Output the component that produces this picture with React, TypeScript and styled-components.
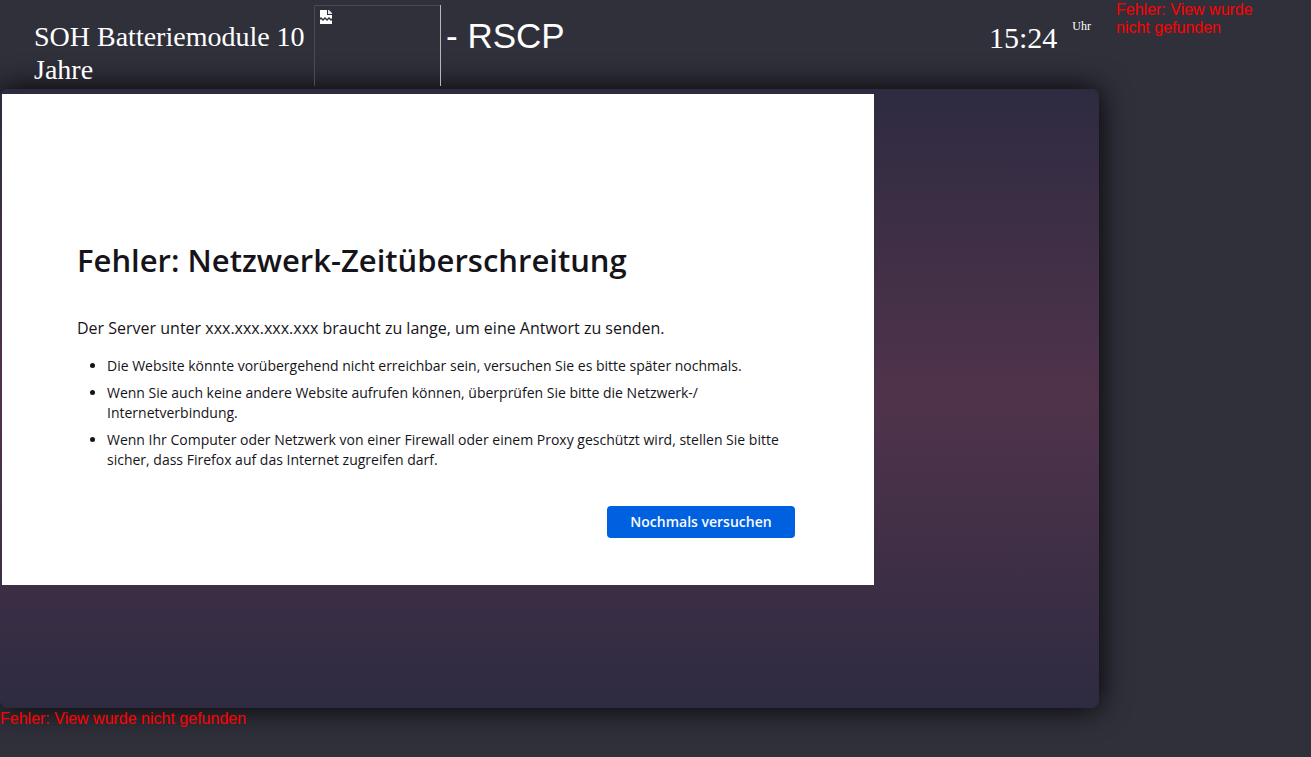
import React from "react";
import styled, { createGlobalStyle } from "styled-components";

const GlobalStyle = createGlobalStyle`
  * { box-sizing: border-box; }
  body {
    margin: 0;
    background: #30303b;
    color: #fff;
    font-family: "Liberation Sans", Arial, sans-serif;
  }
`;

const Page = styled.div`
  display: grid;
  grid-template-columns: minmax(0, 1fr) 212px;
  min-height: 100vh;
`;

const MainColumn = styled.div`
  display: flex;
  flex-direction: column;
`;

/* Stacked above the panel so that its shadow does not darken the title. */
const Header = styled.header`
  position: relative;
  z-index: 1;
  display: flex;
  align-items: flex-start;
  height: 89px;
  padding: 0 8px 0 34px;
`;

const Title = styled.h1`
  width: 280px;
  margin: 0;
  padding-top: 20px;
  font: 400 28px/33px "Liberation Serif", "Times New Roman", serif;
`;

const MissingImage = styled.svg`
  flex: none;
  width: 127px;
  height: 81px;
  margin-top: 5px;
`;

const Protocol = styled.span`
  flex: 1;
  padding: 16px 0 0 5px;
  font-size: 35px;
  line-height: 40px;
`;

const Clock = styled.time`
  display: flex;
  gap: 15px;
  font-family: "Liberation Serif", "Times New Roman", serif;
`;

const ClockTime = styled.span`
  padding-top: 20px;
  font-size: 30px;
  line-height: 36px;
`;

const ClockUnit = styled.span`
  padding-top: 18px;
  font-size: 12px;
  line-height: 16px;
`;

const Panel = styled.main`
  flex: 1;
  padding: 5px 2px;
  border-radius: 8px;
  background: linear-gradient(#2e2b41, #50334b 50%, #2e2b41);
  box-shadow: 0 0 30px #000;
`;

const ErrorFrame = styled.section`
  display: flex;
  flex-direction: column;
  width: 80%;
  max-width: 872px;
  min-height: 491px;
  padding: 142px 79px 47px 75px;
  background: #fff;
  color: #15141a;
  font-family: "Open Sans", "Segoe UI", sans-serif;
`;

const ErrorHeading = styled.h2`
  margin: 0;
  font-size: 31px;
  font-weight: 600;
  line-height: 48px;
`;

const ErrorText = styled.p`
  margin: 32px 0 0;
  font-size: 16px;
  line-height: 24px;
`;

const Hints = styled.ul`
  margin: 16px 0 0;
  padding-left: 30px;
  font-size: 14px;
  line-height: 20px;
`;

const Hint = styled.li`
  margin-bottom: 7px;
`;

const RetryButton = styled.button`
  align-self: flex-end;
  width: 188px;
  height: 32px;
  margin-top: 29px;
  padding: 0;
  border: 0;
  border-radius: 4px;
  background: #0061e0;
  color: #fbfbfe;
  font: 600 14px/20px "Open Sans", "Segoe UI", sans-serif;
`;

const ViewError = styled.p`
  margin: 0;
  color: #f00;
  font-size: 16px;
  line-height: 18px;
`;

const Footer = styled.footer`
  position: relative;
  height: 49px;
  padding-top: 2px;
`;

const Sidebar = styled.aside`
  position: relative;
  padding: 1px 40px 0 17px;
`;

export default function App() {
  return (
    <>
      <GlobalStyle />
      <Page>
        <MainColumn>
          <Header>
            <Title>SOH Batteriemodule 10 Jahre</Title>
            <MissingImage viewBox="0 0 127 81" aria-hidden="true">
              <path d="M0.5 81V0.5H126" fill="none" stroke="#4a4a55" />
              <path d="M126.5 0V81" stroke="#b5b5ba" />
              <path
                d="M6 5h7v5h5v3l-1 1-2-2-2 2-2-2-2 2-2-2-1 1z"
                fill="#fff"
              />
              <path d="M14 5h1l3 3v1h-4z" fill="#e4e4e8" />
              <path d="M6 15l1-1 2 2 2-2 2 2 2-2 2 2 1-1v4H6z" fill="#fff" />
            </MissingImage>
            <Protocol>- RSCP</Protocol>
            <Clock>
              <ClockTime>15:24</ClockTime>
              <ClockUnit>Uhr</ClockUnit>
            </Clock>
          </Header>
          <Panel>
            <ErrorFrame>
              <ErrorHeading>Fehler: Netzwerk-Zeitüberschreitung</ErrorHeading>
              <ErrorText>
                Der Server unter xxx.xxx.xxx.xxx braucht zu lange, um eine
                Antwort zu senden.
              </ErrorText>
              <Hints>
                <Hint>
                  Die Website könnte vorübergehend nicht erreichbar sein,
                  versuchen Sie es bitte später nochmals.
                </Hint>
                <Hint>
                  Wenn Sie auch keine andere Website aufrufen können,
                  überprüfen Sie bitte die Netzwerk-/<wbr />
                  Internetverbindung.
                </Hint>
                <Hint>
                  Wenn Ihr Computer oder Netzwerk von einer Firewall oder einem
                  Proxy geschützt wird, stellen Sie bitte sicher, dass Firefox
                  auf das Internet zugreifen darf.
                </Hint>
              </Hints>
              <RetryButton type="button">Nochmals versuchen</RetryButton>
            </ErrorFrame>
          </Panel>
          <Footer>
            <ViewError>Fehler: View wurde nicht gefunden</ViewError>
          </Footer>
        </MainColumn>
        <Sidebar>
          <ViewError>Fehler: View wurde nicht gefunden</ViewError>
        </Sidebar>
      </Page>
    </>
  );
}
